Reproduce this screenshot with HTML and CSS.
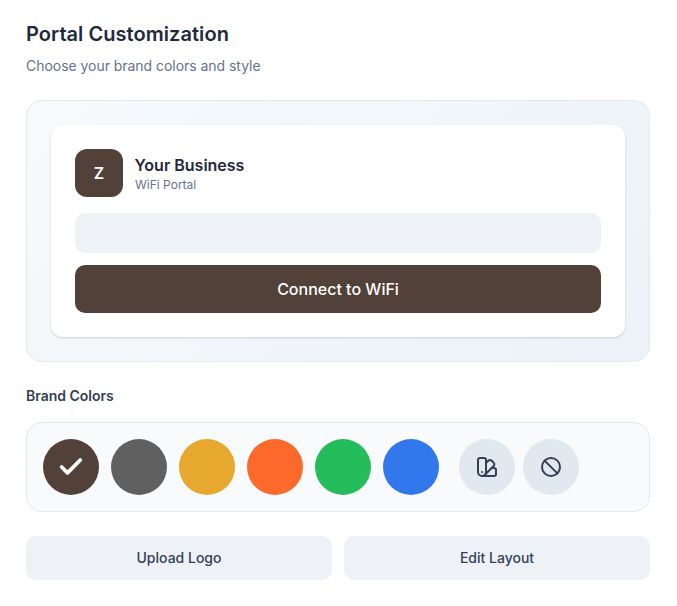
FILE: index.html
```html
<!DOCTYPE html>
<html lang="en">
<head>
<meta charset="utf-8">
<title>Portal Customization</title>
<link rel="stylesheet" href="styles.css">
</head>
<body>
<main class="page">
  <h1 class="title">Portal Customization</h1>
  <p class="subtitle">Choose your brand colors and style</p>
  <section class="preview">
    <div class="card">
      <div class="brand">
        <div class="logo">Z</div>
        <div class="brand-text">
          <div class="brand-name">Your Business</div>
          <div class="brand-sub">WiFi Portal</div>
        </div>
      </div>
      <div class="field"></div>
      <button class="connect">Connect to WiFi</button>
    </div>
  </section>
  <h2 class="label">Brand Colors</h2>
  <div class="colors">
    <div class="swatch s-brown">
      <svg class="check" width="28" height="28" viewBox="0 0 24 24" fill="none" stroke="#fff" stroke-width="3.2" stroke-linecap="round" stroke-linejoin="round"><path d="M20 6 9 17l-5-5"/></svg>
    </div>
    <div class="swatch s-gray"></div>
    <div class="swatch s-amber"></div>
    <div class="swatch s-orange"></div>
    <div class="swatch s-green"></div>
    <div class="swatch s-blue"></div>
    <div class="tools">
      <div class="swatch s-tool">
        <svg width="24" height="24" viewBox="0 0 24 24" fill="none" stroke="#334155" stroke-width="2" stroke-linecap="round" stroke-linejoin="round"><path d="M11 17a4 4 0 0 1-8 0V5a2 2 0 0 1 2-2h4a2 2 0 0 1 2 2Z"/><path d="M16.7 13H19a2 2 0 0 1 2 2v4a2 2 0 0 1-2 2H7"/><path d="M7 17h.01"/><path d="m11 8 2.3-2.3a2.4 2.4 0 0 1 3.404.004L18.6 7.6a2.4 2.4 0 0 1 .026 3.434L9.9 19.8"/></svg>
      </div>
      <div class="swatch s-tool">
        <svg width="24" height="24" viewBox="0 0 24 24" fill="none" stroke="#334155" stroke-width="2" stroke-linecap="round" stroke-linejoin="round"><circle cx="12" cy="12" r="9"/><path d="m5.6 5.6 12.8 12.8"/></svg>
      </div>
    </div>
  </div>
  <div class="actions">
    <button class="action">Upload Logo</button>
    <button class="action">Edit Layout</button>
  </div>
</main>
</body>
</html>
```
FILE: styles.css
```css
* { box-sizing: border-box; }
html, body { margin: 0; background: #fff; }
body { font-family: Inter, "Liberation Sans", sans-serif; color: #1e293b; }
.page { padding: 20px 27px 26px 26px; display: flex; flex-direction: column; }
.title { margin: 0; font-size: 20px; line-height: 28px; font-weight: 600; letter-spacing: .05px; color: #1e293b; }
.subtitle { margin: 8px 0 0; font-size: 14px; line-height: 20px; font-weight: 400; letter-spacing: -.04px; color: #64748b; }
.preview { margin-top: 24px; padding: 24px; background: linear-gradient(135deg, #f8fafc, #ecf2f7); border: 1px solid #e2e8f0; border-radius: 16px; }
.card { background: #fff; border-radius: 12px; padding: 24px; box-shadow: 0 1px 3px rgba(0,0,0,.1), 0 1px 2px rgba(0,0,0,.06); display: flex; flex-direction: column; }
.brand { display: flex; align-items: center; gap: 12px; }
.logo { width: 48px; height: 48px; border-radius: 12px; background: #524139; color: #fff; display: flex; align-items: center; justify-content: center; font-weight: 600; font-size: 16px; }
.brand-name { margin-left: -.5px; font-size: 16px; line-height: 24px; font-weight: 600; color: #1e293b; }
.brand-sub { font-size: 12px; line-height: 16px; color: #64748b; }
.field { margin-top: 16px; height: 40px; border-radius: 10px; background: #eef2f7; }
.connect { margin-top: 12px; height: 48px; border: 0; border-radius: 10px; background: #524139; color: #fff; font: 500 16px Inter, sans-serif; }
.label { margin: 24px 0 0; font-size: 14px; line-height: 20px; font-weight: 600; color: #334155; }
.colors { margin-top: 16px; display: flex; gap: 12px; padding: 16px; background: #f8fafc; border: 1px solid #e2e8f0; border-radius: 16px; }
.swatch { width: 56px; height: 56px; border-radius: 50%; display: flex; align-items: center; justify-content: center; }
.s-brown { background: #524139; }
.s-gray { background: #606060; }
.s-amber { background: #e6a82e; }
.s-orange { background: #fb6a2b; }
.s-green { background: #25bc5c; }
.s-blue { background: #3078ec; }
.s-tool { background: #e2e8f0; }
.tools { margin-left: 8px; display: flex; gap: 8px; }
.actions { margin-top: 24px; display: grid; grid-template-columns: 1fr 1fr; gap: 12px; }
.action { height: 44px; padding-bottom: 2px; border: 0; border-radius: 10px; background: #eef2f7; color: #334155; font: 500 14px Inter, sans-serif; }
```
